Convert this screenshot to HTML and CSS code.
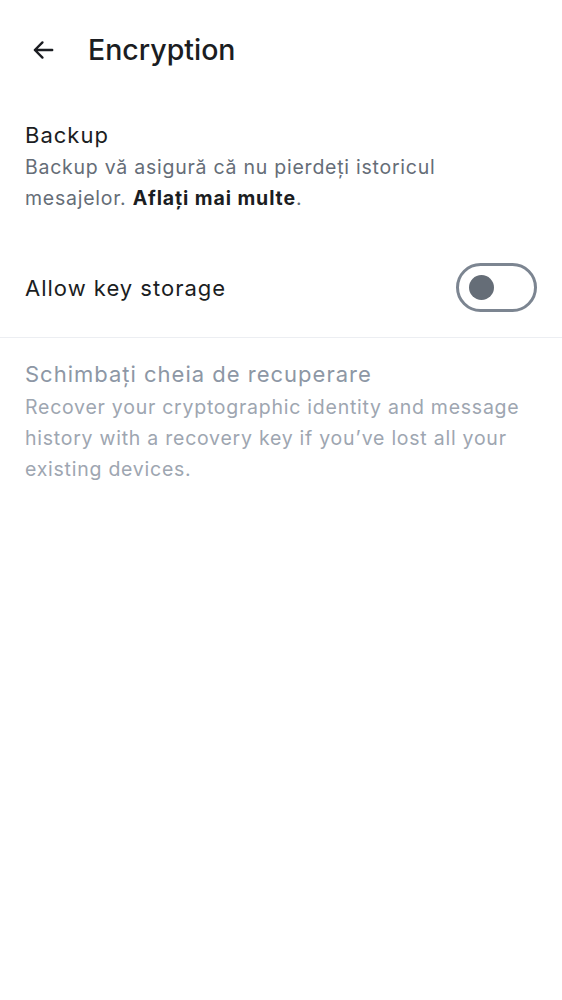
FILE: index.html
```html
<!DOCTYPE html>
<html lang="ro">
<head>
<meta charset="utf-8">
<link rel="stylesheet" href="styles.css">
</head>
<body>
<header class="topbar">
  <svg class="back" viewBox="0 0 24 24" width="26" height="26" aria-hidden="true">
    <path d="M20.5 12H4.5M11.5 5l-7 7 7 7" fill="none" stroke="#1b1d22" stroke-width="2.2" stroke-linecap="round" stroke-linejoin="round"/>
  </svg>
  <h1 class="title">Encryption</h1>
</header>
<section class="block">
  <div class="item-title">Backup</div>
  <p class="item-desc">Backup vă asigură că nu pierdeți istoricul mesajelor. <b>Aflați mai multe</b>.</p>
</section>
<div class="toggle-row">
  <span class="row-label">Allow key storage</span>
  <span class="switch"><span class="knob"></span></span>
</div>
<div class="divider"></div>
<section class="block disabled">
  <div class="item-title">Schimbați cheia de recuperare</div>
  <p class="item-desc">Recover your cryptographic identity and message history with a recovery key if you’ve lost all your existing devices.</p>
</section>
</body>
</html>
```
FILE: styles.css
```css
* { box-sizing: border-box; }
html, body { margin: 0; padding: 0; background: #ffffff; }
body {
  font-family: Inter, "Noto Sans", sans-serif;
  color: #1b1d22;
  width: 562px;
}
.topbar {
  height: 99px;
  display: flex;
  align-items: center;
  padding-left: 30px;
  gap: 32px;
}
.back { display: block; }
.title {
  margin: 0;
  font-size: 28.5px;
  font-weight: 500;
  letter-spacing: 0;
}
.block {
  padding: 21px 25px 0;
}
.item-title {
  font-size: 22px;
  line-height: 30px;
  letter-spacing: 1px;
  color: #1b1d22;
}
.item-desc {
  margin: 2px 0 0;
  font-size: 19.5px;
  line-height: 31px;
  letter-spacing: 0.75px;
  color: #656d77;
  padding-right: 60px;
}
.item-desc b { color: #1b1d22; font-weight: 700; letter-spacing: 0.9px; }
.toggle-row {
  display: flex;
  align-items: center;
  justify-content: space-between;
  padding: 25px;
  margin-top: 24px;
}
.row-label { font-size: 22px; letter-spacing: 1px; }
.switch {
  width: 81px;
  height: 49px;
  border: 3px solid #7c8591;
  border-radius: 25px;
  display: flex;
  align-items: center;
  padding-left: 10px;
}
.knob {
  width: 25px;
  height: 25px;
  border-radius: 50%;
  background: #656d77;
}
.divider { height: 1px; background: #eceef2; }
.disabled { padding-top: 20px; }
.disabled .item-title { color: #8d97a5; line-height: 32px; }
.disabled .item-desc { color: #9ea6b1; margin-top: 2px; padding-right: 0; }
```
